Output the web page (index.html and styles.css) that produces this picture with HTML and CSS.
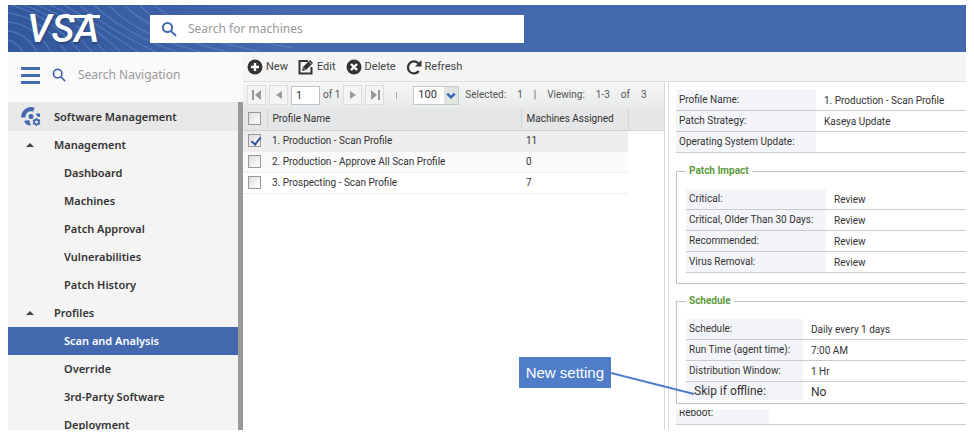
FILE: index.html
```html
<!DOCTYPE html>
<html lang="en">
<head>
<meta charset="utf-8">
<title>VSA - Scan and Analysis</title>
<link rel="stylesheet" href="styles.css">
</head>
<body>
<div class="app">
  <header class="topbar">
    <svg class="waves" viewBox="0 0 290 47" width="290" height="47" aria-hidden="true">
      <defs>
        <linearGradient id="fade" x1="0" x2="1"><stop offset="0" stop-color="#33579c"/><stop offset="1" stop-color="#4469af"/></linearGradient>
      </defs>
      <rect width="290" height="47" fill="url(#fade)"/>
      <g fill="none" stroke="#6285c3" stroke-width="1.3" opacity=".6">
        <path d="M0 35Q9 37 15 47M0 26Q17 27 29 47M0 17Q27 19 43 47M0 8Q34 12 58 47M3 0Q44 11 72 47M15 0Q55 13 84 47M28 0Q68 14 97 47M42 0Q80 16 113 47M56 0Q91 21 130 47M71 0Q103 26 148 47M86 0Q117 29 169 47M101 0Q126 29 193 47M117 0Q139 26 218 47M132 0Q151 26 250 46M147 0Q166 23 285 43"/>
      </g>
    </svg>
    <a class="logo" href="#">VSA</a>
    <form class="machine-search">
      <svg viewBox="0 0 16 16" width="16" height="16" aria-hidden="true"><circle cx="6.5" cy="6.5" r="4.6"/><path d="M10 10l5 5"/></svg>
      <input type="search" placeholder="Search for machines" aria-label="Search for machines">
    </form>
  </header>

  <div class="body">
    <aside class="sidebar">
      <div class="nav-search">
        <button class="menu" type="button" aria-label="Menu"><span></span><span></span><span></span></button>
        <svg viewBox="0 0 16 16" width="14" height="14" aria-hidden="true"><circle cx="6.5" cy="6.5" r="4.8"/><path d="M10 10l5 5"/></svg>
        <input type="search" placeholder="Search Navigation" aria-label="Search Navigation">
      </div>
      <nav class="nav">
        <a class="module" href="#"><svg viewBox="0 0 20 20" width="20" height="20" aria-hidden="true">
          <path d="M2.2 10.5A8 8 0 0 1 13 2.7" fill="none" stroke="#4469af" stroke-width="4"/>
          <path d="M3 14l5-1 2 5.500q-5 0-7-4.500zM15 6.500l4 0 0 3.500-3-.5z" fill="#4469af"/>
          <circle cx="10" cy="9.500" r="2.500" fill="#4469af"/>
          <circle cx="15.500" cy="15" r="2.400" fill="none" stroke="#4469af" stroke-width="1.800"/>
          <path d="M15.500 11v1.500M15.500 17.500V19M12 13l1.400.8M17.600 16.200l1.400.8M12 17l1.400-.8M17.600 13.800l1.400-.8" stroke="#4469af" stroke-width="1.500"/>
        </svg><span>Software Management</span></a>
        <a class="group" href="#">Management</a>
        <a class="item" href="#">Dashboard</a>
        <a class="item" href="#">Machines</a>
        <a class="item" href="#">Patch Approval</a>
        <a class="item" href="#">Vulnerabilities</a>
        <a class="item" href="#">Patch History</a>
        <a class="group" href="#">Profiles</a>
        <a class="item current" href="#" aria-current="page">Scan and Analysis</a>
        <a class="item" href="#">Override</a>
        <a class="item" href="#">3rd-Party Software</a>
        <a class="item" href="#">Deployment</a>
      </nav>
    </aside>

    <main class="main">
      <div class="toolbar">
        <button type="button"><svg viewBox="0 0 16 16" width="16" height="16" aria-hidden="true"><circle cx="8" cy="8" r="7.500" fill="#333"/><path d="M8 4v8M4 8h8" stroke="#fff" stroke-width="2.400"/></svg>New</button>
        <button type="button"><svg viewBox="0 0 16 16" width="16" height="16" aria-hidden="true"><path d="M10 2H1.500v12.500h12V8" fill="none" stroke="#333" stroke-width="2"/><path d="M4 12l1-4 7-7 3 3-7 7z" fill="#333"/><path d="M5.500 9l1.800 1.800M11 2.500l2.500 2.500" stroke="#fff" stroke-width=".7"/></svg>Edit</button>
        <button type="button"><svg viewBox="0 0 16 16" width="16" height="16" aria-hidden="true"><circle cx="8" cy="8" r="7.500" fill="#333"/><path d="M5 5l6 6M11 5l-6 6" stroke="#fff" stroke-width="2.400"/></svg>Delete</button>
        <button type="button"><svg viewBox="0 0 16 16" width="16" height="16" aria-hidden="true"><path d="M12.500 4.500A6 6 0 1 0 12.800 12" fill="none" stroke="#333" stroke-width="2.200"/><path d="M15.500 1v6.500H9z" fill="#333"/></svg>Refresh</button>
      </div>

      <div class="panes">
        <section class="list">
          <div class="pager">
            <button type="button" aria-label="First page"><svg viewBox="0 0 12 12" width="12" height="12"><path d="M1 1h2v10H1zM10 1v10L4 6z"/></svg></button>
            <button type="button" aria-label="Previous page"><svg viewBox="0 0 12 12" width="12" height="12"><path d="M9 2v8L3 6z"/></svg></button>
            <input type="text" value="1" aria-label="Page">
            <span>of 1</span>
            <button type="button" aria-label="Next page"><svg viewBox="0 0 12 12" width="12" height="12"><path d="M3 2v8l6-4z"/></svg></button>
            <button type="button" aria-label="Last page"><svg viewBox="0 0 12 12" width="12" height="12"><path d="M9 1h2v10H9zM2 1v10l6-5z"/></svg></button>
            <i class="divider"></i>
            <span class="page-size">
              <select aria-label="Rows per page"><option>100</option></select>
              <svg viewBox="0 0 14 18" width="14" height="17" aria-hidden="true"><path d="M3 7l4 4 4-4" fill="none" stroke="#2f62b8" stroke-width="2.500"/></svg>
            </span>
            <span class="counts"><span>Selected:</span><span>1</span><span>|</span><span>Viewing:</span><span>1-3</span><span>of</span><span>3</span></span>
          </div>
          <div class="grid-area">
            <table class="profiles">
              <colgroup><col class="c-check"><col><col class="c-count"><col class="c-rest"></colgroup>
              <thead><tr><th><input type="checkbox" aria-label="Select all"></th><th>Profile Name</th><th>Machines Assigned</th><th class="rest"></th></tr></thead>
              <tbody>
                <tr class="selected"><td><input type="checkbox" id="p1" checked></td><td><label for="p1">1. Production - Scan Profile</label></td><td>11</td><td class="rest"></td></tr>
                <tr class="alt"><td><input type="checkbox" id="p2"></td><td><label for="p2">2. Production - Approve All Scan Profile</label></td><td>0</td><td class="rest"></td></tr>
                <tr><td><input type="checkbox" id="p3"></td><td><label for="p3">3. Prospecting - Scan Profile</label></td><td>7</td><td class="rest"></td></tr>
              </tbody>
            </table>
          </div>
        </section>

        <section class="details">
          <dl class="fields">
            <div><dt>Profile Name:</dt><dd>1. Production - Scan Profile</dd></div>
            <div><dt>Patch Strategy:</dt><dd>Kaseya Update</dd></div>
            <div><dt>Operating System Update:</dt><dd></dd></div>
          </dl>
          <fieldset>
            <legend>Patch Impact</legend>
            <dl class="fields">
              <div><dt>Critical:</dt><dd>Review</dd></div>
              <div><dt>Critical, Older Than 30 Days:</dt><dd>Review</dd></div>
              <div><dt>Recommended:</dt><dd>Review</dd></div>
              <div><dt>Virus Removal:</dt><dd>Review</dd></div>
            </dl>
          </fieldset>
          <fieldset class="schedule">
            <legend>Schedule</legend>
            <dl class="fields narrow">
              <div><dt>Schedule:</dt><dd>Daily every 1 days</dd></div>
              <div><dt>Run Time (agent time):</dt><dd>7:00 AM</dd></div>
              <div><dt>Distribution Window:</dt><dd>1 Hr</dd></div>
              <div class="added"><dt>Skip if offline:</dt><dd>No</dd></div>
            </dl>
            <div class="callout"><span>New setting</span><svg viewBox="0 0 84 24" width="84" height="24" aria-hidden="true"><path d="M0 1l83 21" stroke="#4f7dca" stroke-width="2"/></svg></div>
          </fieldset>
          <dl class="fields clipped">
            <div><dt>Reboot:</dt><dd></dd></div>
          </dl>
        </section>
      </div>
    </main>
  </div>
</div>
</body>
</html>
```
FILE: styles.css
```css
* { box-sizing: border-box; }

body {
  margin: 0;
  padding: 5px 8px 7px;
  height: 100vh;
  background: #fff;
  color: #333;
  font: 11px/16px Roboto, "Liberation Sans", sans-serif;
}

button, input, select { font: inherit; color: inherit; margin: 0; }
button { border: 0; padding: 0; background: none; }
a { color: inherit; text-decoration: none; }
dl, dd { margin: 0; }
input[type="search"] { appearance: none; border: 0; outline: 0; background: none; flex: 1; min-width: 0; padding: 0; }
input::placeholder { color: #999; opacity: 1; }

.app { display: flex; flex-direction: column; height: 100%; }

/* Top bar */
.topbar {
  position: relative;
  display: flex;
  align-items: center;
  flex: none;
  height: 47px;
  background: #4469af;
}
.waves { position: absolute; left: 0; top: 0; }
.logo {
  position: relative;
  width: 142px;
  padding-left: 19px;
  color: #fff;
  font: italic 500 39px/46px Roboto, sans-serif;
  text-shadow: 1px 2px 2px #29487f;
}
.logo::after {
  content: "";
  position: absolute;
  left: 51px;
  top: 9px;
  width: 41px;
  height: 3px;
  background: #fff;
}
.machine-search {
  position: relative;
  display: flex;
  align-items: center;
  gap: 11px;
  width: 39%;
  height: 28px;
  padding: 0 11px;
  background: #fff;
  font: 12px/16px "Noto Sans", sans-serif;
}
.machine-search svg, .nav-search svg { fill: none; stroke: #4469af; stroke-width: 2; flex: none; }

.body { display: flex; flex: 1; min-height: 0; }

/* Sidebar */
.sidebar {
  flex: none;
  width: 235px;
  overflow: hidden;
  background: #f4f4f4;
  font: 12px/16px "Noto Sans", sans-serif;
}
.nav-search {
  display: flex;
  align-items: center;
  gap: 12px;
  height: 50px;
  padding: 0 14px 4px 13px;
  background: #fafafa;
}
.menu { display: flex; flex-direction: column; gap: 4px; width: 19px; }
.menu span { height: 3px; background: #4469af; }
.nav {
  border-right: 5px solid #999;
  font-size: 11px;
  font-weight: 600;
  color: #333;
}
.nav a { display: flex; align-items: center; height: 28px; }
.nav .module { height: 29px; gap: 13px; padding-left: 13px; background: #e8e8e8; }
.nav .group { gap: 20px; padding-left: 18px; }
.group::before {
  content: "";
  border: 4px solid transparent;
  border-top: 0;
  border-bottom-color: #444;
}
.nav .item { padding-left: 56px; }
.nav .current { background: #4469af; color: #fff; }

/* Toolbar */
.main { flex: 1; min-width: 0; display: flex; flex-direction: column; }
.toolbar {
  display: flex;
  align-items: center;
  gap: 10px;
  height: 30px;
  padding: 0 4px;
  background: #f5f5f5;
  border-bottom: 1px solid #ddd;
}
.toolbar button { display: flex; align-items: center; gap: 3px; color: #444; }

.panes { display: flex; flex: 1; min-height: 0; font-size: 10px; }
.list { flex: 1; min-width: 0; border-right: 1px solid #ddd; }

/* Pager */
.pager {
  display: flex;
  align-items: center;
  gap: 3px;
  height: 26px;
  padding: 0 4px;
  background: linear-gradient(#f6f6f6, #e9eaea);
  color: #555;
  white-space: nowrap;
}
.pager button {
  display: grid;
  place-items: center;
  width: 19px;
  height: 20px;
  border: 1px solid #ddd;
  background: #f4f4f4;
}
.pager button svg { fill: #999; }
.pager input { width: 29px; height: 19px; border: 1px solid #bbc3cc; background: #fff; padding: 0 4px; color: #333; font-size: 11px; }
.divider { width: 1px; height: 7px; margin: 0 13px 0 9px; background: #aaa; }
.page-size { display: flex; height: 19px; border: 1px solid #c3c9cf; background: #fff; color: #333; }
.page-size select { appearance: none; width: 30px; border: 0; padding: 0 4px; background: #fff; font-size: 11px; }
.page-size svg { background: #e0e6df; }
.counts { display: flex; gap: 11px; margin-left: 3px; }

/* Profile table */
.profiles { width: 100%; table-layout: fixed; border-collapse: collapse; }
.c-check { width: 24px; }
.c-count { width: 107px; }
.c-rest { width: 36px; }
.profiles th, .profiles td { height: 21px; padding: 0 5px; text-align: left; font-weight: 400; white-space: nowrap; border-bottom: 1px solid #eee; }
.profiles th {
  height: 22px;
  background: #e4e6e7;
  border-bottom-color: #cfd2d4;
  border-right: 1px solid #d3d5d7;
}
.profiles .selected td { background: #eee; }
.profiles .alt td { background: #fafafa; }
.profiles td.rest { background: #fff; border: 0; }
.profiles th.rest { border-right: 0; }
.profiles input {
  appearance: none;
  display: block;
  width: 13px;
  height: 13px;
  border: 1px solid #999;
  background: linear-gradient(135deg, #ddd, #fff);
}
.profiles input:checked::before {
  content: "";
  display: block;
  width: 4px;
  height: 8px;
  margin: 0 4px;
  border: solid #33559b;
  border-width: 0 2px 2px 0;
  transform: rotate(38deg);
}

/* Details */
.details {
  flex: none;
  width: 298px;
  margin-left: 3px;
  padding: 8px 0 0 7px;
  border-left: 1px solid #ddd;
}
.fields > div { display: flex; height: 21px; border-bottom: 1px solid #c9cbce; }
.fields dt { flex: none; width: 140px; padding: 0 3px; line-height: 19px; background: #f3f5f8; white-space: nowrap; }
.fields dd { padding-left: 8px; line-height: 21px; }
.fields.narrow dt { width: 117px; }
fieldset {
  position: relative;
  margin: 10px 0 0;
  padding: 10px 0 10px 9px;
  border: 1px solid #bfc3c7;
  border-right: 0;
  min-width: 0;
}
legend { margin: 0; padding: 0 3px; color: #5b9a3c; font-weight: 700; }
.schedule { margin-top: 9px; padding-bottom: 3px; }
.fields .added { height: 18px; border: 0; font-size: 12px; }
.added dt { padding-left: 8px; }
.clipped { margin-top: 6px; }
.fields.clipped > div { height: 15px; overflow: hidden; }
.fields.clipped dt { width: 93px; line-height: 6px; }

/* Annotation pinned over the list, pointing at the added field */
.callout {
  position: absolute;
  right: calc(100% - 18px);
  bottom: 7px;
  display: flex;
  align-items: flex-end;
}
.callout span {
  padding: 0 7px;
  background: #4f7dca;
  color: #fff;
  font: 15px/31px "Liberation Sans", sans-serif;
  white-space: nowrap;
  margin-bottom: 8px;
}
```
